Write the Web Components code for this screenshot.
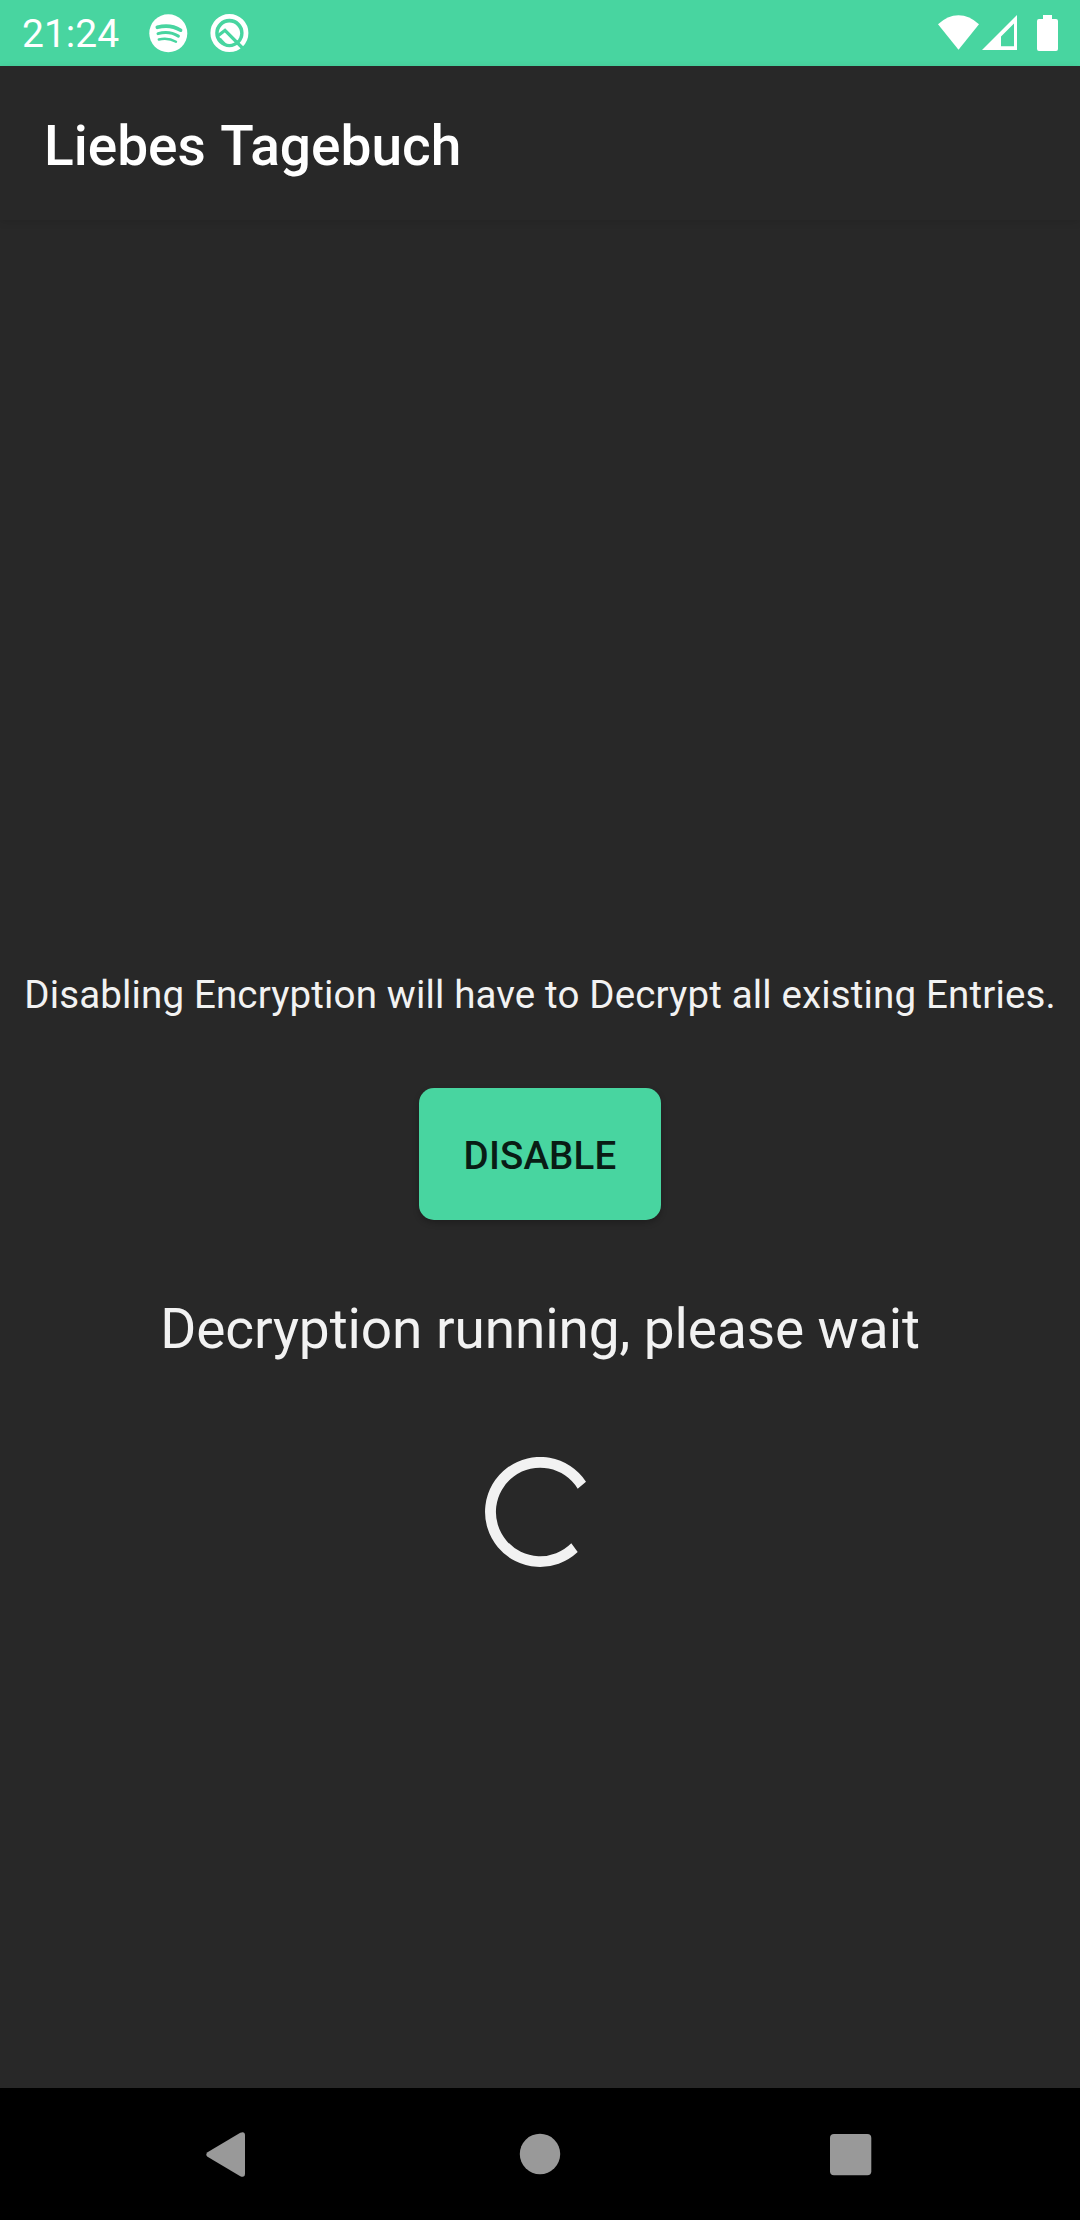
<!DOCTYPE html>
<html lang="de">
<head>
<meta charset="utf-8">
<title>Liebes Tagebuch</title>
<style>
html,body{margin:0;padding:0;background:#282828}
body{font-family:Roboto,sans-serif;font-size:38.5px}
</style>
</head>
<body>
<diary-screen></diary-screen>
<script>
const define = (name, html) => customElements.define(name, class extends HTMLElement {
  constructor() {
    super();
    this.attachShadow({mode: 'open'}).innerHTML = html;
  }
});

define('status-bar', `
<style>
:host{display:flex;justify-content:space-between;height:66px;box-sizing:border-box;padding:0 21px 0 22px;background:#48d5a0;color:#fff}
div{display:flex;height:66px}
time{font-size:39px;line-height:69px;width:96px}
svg{display:block;height:66px;fill:#fff}
.spot{margin-left:28px}
.q{margin-left:17px}
</style>
<div>
<time>21:24</time>
<svg class="spot" width="44" viewBox="146 0 44 66"><circle cx="168.3" cy="33.2" r="19"/>
<g fill="none" stroke="#48d5a0" stroke-linecap="round"><path d="M157.3 27.3q13-3.4 23.3 2.9" stroke-width="3.6"/><path d="M158 33.6q11.4-3 20.4 2.5" stroke-width="3"/><path d="M158.8 39.5q9.3-2.2 17.2 2.2" stroke-width="2.4"/></g></svg>
<svg class="q" width="44" viewBox="207 0 44 66"><circle cx="229.4" cy="33" r="16.6" fill="none" stroke="#fff" stroke-width="4.8"/><circle cx="229.4" cy="33.2" r="10.7"/>
<path d="M218 35.8L225 30.3L244.5 50" fill="none" stroke="#48d5a0" stroke-width="3.2"/>
<path d="M217.5 36L221.3 38.5L228 45.5L221 43z" fill="#48d5a0"/></svg>
</div>
<div>
<svg width="122" viewBox="937 0 122 66"><path d="M938 24.3Q947.5 15.2 958.5 15.2T979 24.3L958.5 49.7z"/>
<path fill-rule="evenodd" d="M1017 15v35h-35zM1014 23.5L1001 36.5V46.3h13z"/>
<path d="M1043 15h9v4h4q2 0 2 2v28q0 2-2 2h-17q-2 0-2-2v-28q0-2 2-2h4z"/></svg>
</div>`);

define('app-bar', `
<style>
:host{display:flex;align-items:center;height:154px;box-sizing:border-box;padding:5px 44px 0;background:#282828;color:#fff;box-shadow:0 2px 8px rgba(0,0,0,.1);position:relative}
h1{margin:0;font-size:55px;font-weight:500;line-height:64px;word-spacing:2px}
</style><h1><slot></slot></h1>`);

define('action-button', `
<style>
:host{display:block}
button{display:flex;align-items:center;justify-content:center;width:242px;height:132px;margin:0;padding:3px 0 0;border:0;border-radius:15px;background:#48d5a0;color:#091c15;font:500 38.5px/46px Roboto,sans-serif;letter-spacing:.15px;box-shadow:0 3px 6px rgba(0,0,0,.24)}
</style><button><slot></slot></button>`);

define('progress-ring', `
<style>:host{display:block;width:110px;height:110px}svg{display:block}</style>
<svg width="110" height="110" viewBox="-55 -55 110 110"><path fill="#f2f2f2" d="M46 -30.3A55 55 0 1 0 37.7 40L31.3 31.3A44.2 44.2 0 1 1 37.7 -23.3z"/></svg>`);

define('nav-bar', `
<style>
:host{display:flex;justify-content:center;gap:250px;height:132px;background:#000}
svg{display:block;fill:#999}
</style>
<svg width="60" height="132" viewBox="200 2088 60 132"><path d="M207.5 2152.2L240.3 2132.8Q245 2131 245 2135.5V2173.5Q245 2178 240.3 2176.2L207.5 2156.8Q205 2154.5 207.5 2152.2z"/></svg>
<svg width="60" height="132" viewBox="510 2088 60 132"><circle cx="540" cy="2154" r="20.2"/></svg>
<svg width="60" height="132" viewBox="820 2088 60 132"><rect x="830" y="2134" width="41.3" height="41.3" rx="4"/></svg>`);

define('diary-screen', `
<style>
:host{display:flex;flex-direction:column;width:1080px;height:2220px;background:#282828;color:#f2f2f2}
main{flex:1;display:flex;flex-direction:column;align-items:center}
p{margin:0;white-space:nowrap}
.info{margin-top:752px;font-size:38.5px;line-height:46px;letter-spacing:.15px}
action-button{margin-top:70px}
.state{margin-top:77px;font-size:55px;line-height:64px;letter-spacing:-.1px}
progress-ring{margin-top:96px}
</style>
<status-bar></status-bar>
<app-bar>Liebes Tagebuch</app-bar>
<main>
<p class="info">Disabling Encryption will have to Decrypt all existing Entries.</p>
<action-button>DISABLE</action-button>
<p class="state">Decryption running, please wait</p>
<progress-ring></progress-ring>
</main>
<nav-bar></nav-bar>`);
</script>
</body>
</html>
